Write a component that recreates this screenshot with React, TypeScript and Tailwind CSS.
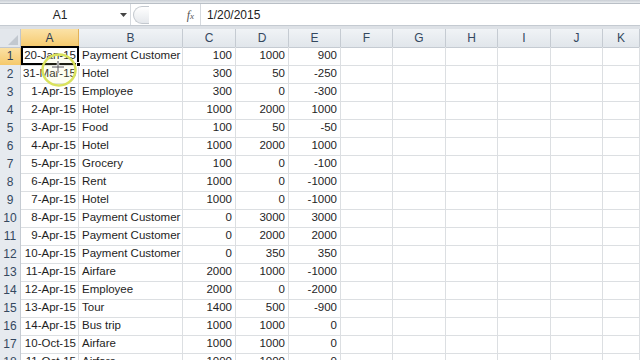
import React from "react";

const cols = ["A", "B", "C", "D", "E", "F", "G", "H", "I", "J", "K"];

const data: [string, string, string, string, string][] = [
  ["20-Jan-15", "Payment Customer", "100", "1000", "900"],
  ["31-Mar-15", "Hotel", "300", "50", "-250"],
  ["1-Apr-15", "Employee", "300", "0", "-300"],
  ["2-Apr-15", "Hotel", "1000", "2000", "1000"],
  ["3-Apr-15", "Food", "100", "50", "-50"],
  ["4-Apr-15", "Hotel", "1000", "2000", "1000"],
  ["5-Apr-15", "Grocery", "100", "0", "-100"],
  ["6-Apr-15", "Rent", "1000", "0", "-1000"],
  ["7-Apr-15", "Hotel", "1000", "0", "-1000"],
  ["8-Apr-15", "Payment Customer", "0", "3000", "3000"],
  ["9-Apr-15", "Payment Customer", "0", "2000", "2000"],
  ["10-Apr-15", "Payment Customer", "0", "350", "350"],
  ["11-Apr-15", "Airfare", "2000", "1000", "-1000"],
  ["12-Apr-15", "Employee", "2000", "0", "-2000"],
  ["13-Apr-15", "Tour", "1400", "500", "-900"],
  ["14-Apr-15", "Bus trip", "1000", "1000", "0"],
  ["10-Oct-15", "Airfare", "1000", "1000", "0"],
  ["11-Oct-15", "Airfare", "1000", "1000", "0"],
];

const gridCols =
  "grid grid-cols-[21px_58px_104px_53px_53px_52px_52px_53px_52px_53px_52px_1fr]";

export default function App() {
  return (
    <div
      className="relative w-[640px] h-[360px] overflow-hidden bg-white text-[#1e1e1e]"
      style={{ fontFamily: '"Liberation Sans", Arial, sans-serif' }}
    >
      {/* top ribbon edge */}
      <div className="h-[4px] bg-gradient-to-b from-[#c9ced4] to-[#e8ebee] border-b border-[#b9bfc6]" />
      {/* formula bar */}
      <div className="flex h-[21px] items-center bg-white">
        <div className="flex h-full w-[131px] items-center border-r border-[#d5d9de]">
          <div className="flex-1 text-center text-[12px] text-[#222] pl-[4px]">A1</div>
          <div className="w-[14px] flex justify-center">
            <svg width="7" height="4" viewBox="0 0 7 4">
              <path d="M0 0 L7 0 L3.5 4 Z" fill="#444" />
            </svg>
          </div>
        </div>
        <div className="flex h-full w-[70px] items-center border-r border-[#d5d9de]">
          <div className="ml-[2px] h-[18px] w-[16px] rounded-l-full border border-r-0 border-[#c3c8ce] bg-gradient-to-b from-[#ffffff] to-[#e5e8ec]" />
          <div className="flex-1" />
          <span
            className="mr-[6px] text-[12px] italic text-[#555]"
            style={{ fontFamily: '"Liberation Serif", serif' }}
          >
            f<span className="text-[9px]">x</span>
          </span>
        </div>
        <div className="pl-[6px] text-[12px] text-[#222]">1/20/2015</div>
      </div>
      {/* separator band */}
      <div className="h-[4px] bg-[#dde1e6] border-t border-[#c4cad1]" />
      {/* column headers */}
      <div className={`${gridCols} h-[18px]`}>
        <div className="relative border-r border-b border-[#c0c6ce] bg-[#e3e7ec]">
          <svg className="absolute right-[2px] bottom-[2px]" width="10" height="10" viewBox="0 0 10 10">
            <path d="M10 0 L10 10 L0 10 Z" fill="#c2c8cf" />
          </svg>
        </div>
        {cols.map((c, i) => (
          <div
            key={c}
            className={
              i === 0
                ? "flex items-center justify-center border-r border-b border-[#e3b257] bg-gradient-to-b from-[#fbe2a7] to-[#f5c96b] text-[12px] text-[#2e3e55]"
                : "flex items-center justify-center border-r border-b border-[#c5cbd2] bg-gradient-to-b from-[#f0f3f6] to-[#e1e6eb] text-[12px] text-[#34485f]"
            }
          >
            {c}
          </div>
        ))}
      </div>
      {/* rows */}
      {data.map((r, ri) => (
        <div key={ri} className={`${gridCols} h-[18px]`}>
          <div
            className={
              ri === 0
                ? "flex items-center justify-center border-r border-b border-[#e3b257] bg-gradient-to-b from-[#fbe2a7] to-[#f5c96b] text-[12px] text-[#2e3e55]"
                : "flex items-center justify-center border-r border-b border-[#c5cbd2] bg-[#e6eaef] text-[12px] text-[#34485f]"
            }
          >
            {ri + 1}
          </div>
          <div className="flex items-center justify-end pr-[2px] border-r border-b border-[#dcdfe2] text-[11.5px] whitespace-nowrap">
            {r[0]}
          </div>
          <div className="flex items-center pl-[3px] border-r border-b border-[#dcdfe2] text-[11.5px] whitespace-nowrap">
            {r[1]}
          </div>
          <div className="flex items-center justify-end pr-[3px] border-r border-b border-[#dcdfe2] text-[11.5px]">
            {r[2]}
          </div>
          <div className="flex items-center justify-end pr-[3px] border-r border-b border-[#dcdfe2] text-[11.5px]">
            {r[3]}
          </div>
          <div className="flex items-center justify-end pr-[3px] border-r border-b border-[#dcdfe2] text-[11.5px]">
            {r[4]}
          </div>
          {Array.from({ length: 6 }).map((_, k) => (
            <div key={k} className="border-r border-b border-[#dcdfe2]" />
          ))}
        </div>
      ))}
      {/* selection box A1 */}
      <div className="absolute left-[21px] top-[46px] h-[19px] w-[58px] border-2 border-black pointer-events-none" />
      <div className="absolute left-[76px] top-[62px] h-[5px] w-[5px] bg-black border border-white" />
      {/* cursor highlight */}
      <svg className="absolute left-[40px] top-[52px]" width="38" height="36" viewBox="0 0 38 36">
        <ellipse cx="19" cy="18" rx="16.5" ry="15.5" fill="rgba(240,245,150,0.12)" stroke="#d9e25c" strokeWidth="2.5" />
        <path d="M18 9 L18 21 M12 15 L24 15" stroke="#fff" strokeWidth="2.5" />
        <path d="M18 9 L18 21 M12 15 L24 15" stroke="#555" strokeWidth="1" />
      </svg>
    </div>
  );
}
